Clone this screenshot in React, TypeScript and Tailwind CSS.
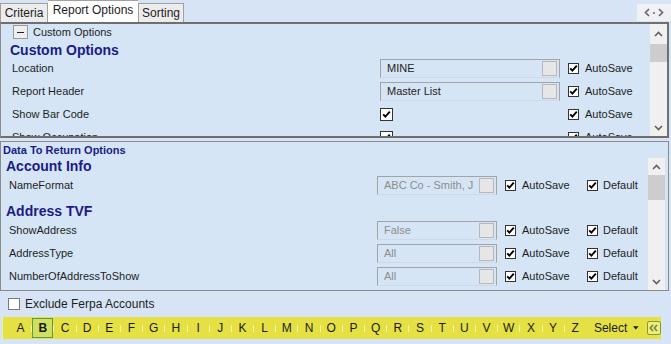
import type { ReactNode } from 'react'

const LETTERS = 'ABCDEFGHIJKLMNOPQRSTUVWXYZ'.split('')

function Check({ checked = true, size = 'sm' }: { checked?: boolean; size?: 'sm' | 'md' }) {
  return (
    <span
      className={
        size === 'md'
          ? 'flex h-[13px] w-[13px] shrink-0 items-center justify-center border border-[#333] bg-white'
          : 'flex h-[11px] w-[11px] shrink-0 items-center justify-center border border-[#333] bg-white'
      }
    >
      {checked && (
        <svg width="9" height="9" viewBox="0 0 9 9">
          <path d="M1.2 4.3 L3.4 6.6 L7.8 1.6" fill="none" stroke="#000" strokeWidth="1.9" />
        </svg>
      )}
    </span>
  )
}

function Chevron({ dir }: { dir: 'up' | 'down' }) {
  return (
    <svg width="9" height="6" viewBox="0 0 9 6">
      <path
        d={dir === 'up' ? 'M1 5 L4.5 1.5 L8 5' : 'M1 1 L4.5 4.5 L8 1'}
        fill="none"
        stroke="#606060"
        strokeWidth="1.6"
      />
    </svg>
  )
}

function Scrollbar({ top, thumb }: { top: string; thumb: string }) {
  return (
    <div className="flex w-[17px] shrink-0 flex-col bg-[#f0f0f0]">
      <div className={`flex items-center justify-center ${top}`}>
        <Chevron dir="up" />
      </div>
      <div className={`bg-[#cdcdcd] ${thumb}`} />
      <div className="flex-1" />
      <div className="flex h-[17px] items-center justify-center">
        <Chevron dir="down" />
      </div>
    </div>
  )
}

function Field({ value, width, dim }: { value: string; width: string; dim?: boolean }) {
  return (
    <div
      className={`flex h-[19px] shrink-0 items-center border border-b-[#d0d8e4] border-l-[#a4a4a4] border-r-[#a4a4a4] border-t-[#a4a4a4] ${width}`}
    >
      <span className={`flex-1 truncate pl-[6px] ${dim ? 'text-[#8d8d8d]' : 'text-[#1e1e1e]'}`}>{value}</span>
      <span className="mr-[2px] h-[15px] w-[15px] border border-[#b8b8b8] bg-[#e6e6e6]" />
    </div>
  )
}

function TopRow({ label, children }: { label: string; children: ReactNode }) {
  return (
    <div className="flex h-[23px] shrink-0 items-center">
      <span className="w-[379px] shrink-0 pl-[11px] text-[#1e1e1e]">{label}</span>
      {children}
    </div>
  )
}

function AutoSave() {
  return (
    <div className="flex items-center gap-[6px]">
      <Check />
      <span className="text-[#1e1e1e]">AutoSave</span>
    </div>
  )
}

function DataRow({ label, value }: { label: string; value: string }) {
  return (
    <div className="flex h-[23px] shrink-0 items-center">
      <span className="w-[376px] shrink-0 pl-[8px] text-[#1e1e1e]">{label}</span>
      <Field value={value} width="w-[120px]" dim />
      <div className="ml-[8px] flex w-[82px] items-center gap-[6px]">
        <Check />
        <span className="text-[#1e1e1e]">AutoSave</span>
      </div>
      <div className="flex items-center gap-[5px]">
        <Check />
        <span className="text-[#1e1e1e]">Default</span>
      </div>
    </div>
  )
}

export default function App() {
  return (
    <div
      className="flex h-[344px] w-[671px] flex-col overflow-hidden bg-[#d6e4f5] text-[11px] leading-[13px]"
      style={{ fontFamily: '"Liberation Sans", Arial, sans-serif' }}
    >
      {/* Tabs */}
      <div className="flex h-[22px] shrink-0 items-end">
        <div className="flex h-[19px] w-[48px] items-center justify-center border border-b-0 border-[#a0a0a0] bg-[#ececec] text-[12px] text-[#1e1e1e]">
          Criteria
        </div>
        <div className="flex h-[22px] w-[90px] items-center justify-center border-t border-[#a0a0a0] bg-white pb-[2px] text-[12px] text-[#1e1e1e]">
          Report Options
        </div>
        <div className="flex h-[19px] w-[46px] items-center justify-center border border-b-0 border-[#a0a0a0] bg-[#ececec] text-[12px] text-[#1e1e1e]">
          Sorting
        </div>
        <div className="flex-1" />
        <div className="mb-[1px] flex h-[17px] w-[34px] items-center justify-center gap-[3px] bg-[#eff1f4]">
          <svg width="6" height="9" viewBox="0 0 6 9">
            <path d="M5 1 L1.5 4.5 L5 8" fill="none" stroke="#6a6a6a" strokeWidth="1.7" />
          </svg>
          <span className="h-[2px] w-[2px] bg-[#8a8a8a]" />
          <svg width="6" height="9" viewBox="0 0 6 9">
            <path d="M1 1 L4.5 4.5 L1 8" fill="none" stroke="#6a6a6a" strokeWidth="1.7" />
          </svg>
        </div>
      </div>

      {/* Custom options panel */}
      <div className="flex h-[116px] w-[669px] shrink-0 overflow-hidden border-b-2 border-l border-r-2 border-t-2 border-b-[#6f6f6f] border-l-[#8a8a8a] border-r-[#6f6f6f] border-t-[#6f6f6f] bg-[#d5e5f5]">
        <div className="flex flex-1 flex-col overflow-hidden pt-[1px]">
          <div className="flex h-[14px] shrink-0 items-center">
            <span className="ml-[12px] flex h-[14px] w-[15px] items-center justify-center border border-[#9a9a9a] bg-[#eeeeee]">
              <span className="h-[1px] w-[7px] bg-[#222]" />
            </span>
            <span className="ml-[5px] text-[#1e1e1e]">Custom Options</span>
          </div>
          <div className="flex h-[18px] shrink-0 items-end pl-[9px] text-[14px] font-bold leading-[14px] text-[#1b1b86]">
            Custom Options
          </div>
          <TopRow label="Location">
            <Field value="MINE" width="w-[180px]" />
            <div className="ml-[8px]">
              <AutoSave />
            </div>
          </TopRow>
          <TopRow label="Report Header">
            <Field value="Master List" width="w-[180px]" />
            <div className="ml-[8px]">
              <AutoSave />
            </div>
          </TopRow>
          <TopRow label="Show Bar Code">
            <div className="w-[180px]">
              <Check size="md" />
            </div>
            <div className="ml-[8px]">
              <AutoSave />
            </div>
          </TopRow>
          <TopRow label="Show Occupation">
            <div className="w-[180px]">
              <Check size="md" />
            </div>
            <div className="ml-[8px]">
              <AutoSave />
            </div>
          </TopRow>
        </div>
        <Scrollbar top="h-[19px]" thumb="mt-[1px] h-[18px]" />
      </div>

      <div className="h-[3px] shrink-0" />

      {/* Data to return panel */}
      <div className="flex h-[150px] w-[669px] shrink-0 flex-col overflow-hidden border border-[#8a8a8a] bg-[#d5e5f5]">
        <div className="flex h-[16px] shrink-0 items-center pl-[2px] font-bold text-[#1b1b86]">
          Data To Return Options
        </div>
        <div className="flex flex-1 overflow-hidden">
          <div className="flex flex-1 flex-col overflow-hidden">
            <div className="flex h-[16px] shrink-0 items-end pl-[5px] text-[14px] font-bold leading-[15px] text-[#1b1b86]">
              Account Info
            </div>
            <DataRow label="NameFormat" value="ABC Co - Smith, J" />
            <div className="flex h-[22px] shrink-0 items-end pl-[5px] text-[14px] font-bold leading-[16px] text-[#1b1b86]">
              Address TVF
            </div>
            <DataRow label="ShowAddress" value="False" />
            <DataRow label="AddressType" value="All" />
            <DataRow label="NumberOfAddressToShow" value="All" />
          </div>
          <Scrollbar top="h-[17px]" thumb="h-[25px]" />
          <div className="w-[3px] shrink-0" />
        </div>
      </div>

      {/* Ferpa */}
      <div className="flex h-[26px] shrink-0 items-center gap-[5px] pl-[8px]">
        <span className="h-[12px] w-[12px] border border-[#7a7a7a] bg-white" />
        <span className="text-[12px] text-[#1e1e1e]">Exclude Ferpa Accounts</span>
      </div>

      {/* Alphabet bar */}
      <div className="ml-[2px] flex h-[22px] w-[659px] shrink-0 items-center border-l border-[#f1ee97] bg-[#e5e144] pl-[6px] text-[12px] text-[#1a1a1a]">
        {LETTERS.map((l, i) => (
          <div key={l} className="flex h-full w-[22.2px] shrink-0 items-center">
            <span className={i === 0 ? 'h-[7px] w-px' : 'h-[7px] w-px bg-[#f6f3a6]'} />
            {l === 'B' ? (
              <span className="flex h-[20px] flex-1 items-center justify-center border border-[#5f9a3e] bg-[#cfe05e] font-bold">
                B
              </span>
            ) : (
              <span className="flex-1 text-center">{l}</span>
            )}
          </div>
        ))}
        <span className="ml-[8px]">Select</span>
        <svg className="ml-[6px]" width="6" height="4" viewBox="0 0 6 4">
          <path d="M0 0 L6 0 L3 3.5 Z" fill="#1a1a1a" />
        </svg>
        <span className="ml-[8px] flex h-[14px] w-[15px] items-center justify-center rounded-[2px] border border-[#8a9c2c] bg-[#ecea86]">
          <svg width="9" height="8" viewBox="0 0 9 8">
            <path d="M4 1 L1.2 4 L4 7 M8 1 L5.2 4 L8 7" fill="none" stroke="#6f7f1c" strokeWidth="1.4" />
          </svg>
        </span>
      </div>
    </div>
  )
}
